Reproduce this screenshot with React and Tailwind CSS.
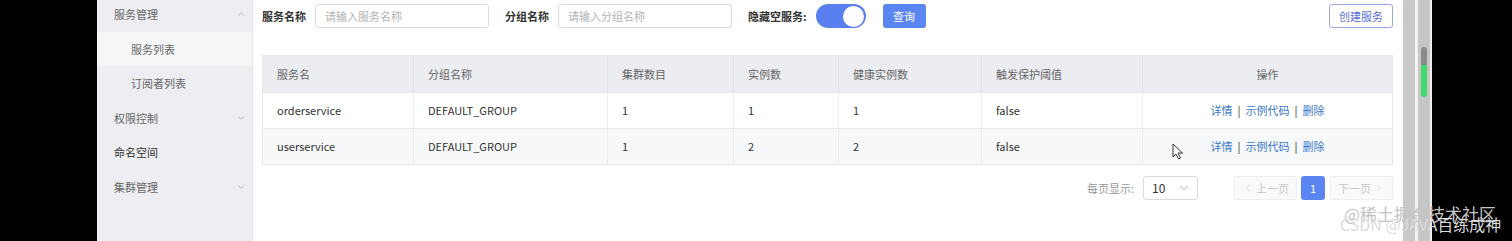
import { ChevronUp, ChevronDown, ChevronLeft, ChevronRight } from "lucide-react"

const font = { fontFamily: '"Noto Sans CJK SC", "Noto Sans", sans-serif' }

const menu = [
  { label: "服务管理", icon: "up" },
  { label: "服务列表", sub: true, active: true },
  { label: "订阅者列表", sub: true },
  { label: "权限控制", icon: "down" },
  { label: "命名空间", dark: true },
  { label: "集群管理", icon: "down" },
]

const columns = [
  { title: "服务名", w: "w-[151px]" },
  { title: "分组名称", w: "w-[194px]" },
  { title: "集群数目", w: "w-[126px]" },
  { title: "实例数", w: "w-[105px]" },
  { title: "健康实例数", w: "w-[143px]" },
  { title: "触发保护阈值", w: "w-[161px]" },
]

const rows = [
  ["orderservice", "DEFAULT_GROUP", "1", "1", "1", "false"],
  ["userservice", "DEFAULT_GROUP", "1", "2", "2", "false"],
]

const Sidebar = () => (
  <div className="w-[156px] shrink-0 bg-[#eceef1] border-r border-[#e2e4e8] overflow-hidden">
    <div className="-mt-[3px]">
      {menu.map((m) => (
        <div
          key={m.label}
          className={`h-[34.6px] flex items-center justify-between pr-[6px] text-[11px] ${
            m.sub ? "pl-[34px]" : "pl-[17px]"
          } ${m.active ? "bg-[#f5f6f8]" : ""} ${m.dark ? "text-[#333]" : "text-[#666]"}`}
        >
          <span>{m.label}</span>
          {m.icon === "up" && <ChevronUp size={10} strokeWidth={1.5} className="text-[#999]" />}
          {m.icon === "down" && <ChevronDown size={10} strokeWidth={1.5} className="text-[#999]" />}
        </div>
      ))}
    </div>
  </div>
)

const Field = ({ label, placeholder }) => (
  <div className="flex items-center">
    <span className="text-[11px] font-bold text-[#333] mr-[9px]">{label}</span>
    <input
      readOnly
      placeholder={placeholder}
      className="w-[174px] h-[24px] border border-[#d9dbe0] rounded-[3px] px-[9px] text-[11px] placeholder:text-[#b3b3b3] outline-none"
    />
  </div>
)

const Cursor = () => (
  <svg width="12" height="17" viewBox="0 0 12 17" className="absolute left-[1172px] top-[143px]">
    <path d="M1 1 L1 14 L4 11 L6.5 16 L8.5 15 L6 10 L10.5 10 Z" fill="#fff" stroke="#333" strokeWidth="1" strokeLinejoin="round" />
  </svg>
)

export default function App() {
  return (
    <div className="relative w-[1512px] h-[241px] flex bg-black overflow-hidden" style={font}>
      <div className="w-[97px] shrink-0 bg-black" />
      <Sidebar />
      <div className="w-[1150px] shrink-0 bg-white pl-[9px] pr-[10px] pt-[4px]">
        <div className="flex items-center h-[24px]">
          <Field label="服务名称" placeholder="请输入服务名称" />
          <div className="ml-[16px]">
            <Field label="分组名称" placeholder="请输入分组名称" />
          </div>
          <span className="ml-[16px] text-[11px] font-bold text-[#333]">隐藏空服务:</span>
          <div className="ml-[9px] w-[50px] h-[24px] rounded-full bg-[#5a7ff0] flex items-center justify-end pr-[2px]">
            <div className="w-[21px] h-[21px] rounded-full bg-white" />
          </div>
          <button className="ml-[17px] w-[43px] h-[24px] rounded-[3px] bg-[#5b86f2] text-white text-[11px]">
            查询
          </button>
          <button className="ml-auto w-[64px] h-[24px] rounded-[3px] border border-[#9ea6e0] text-[#5b6fd6] text-[11px] bg-white">
            创建服务
          </button>
        </div>

        <div className="mt-[27px] border border-[#e6e8eb] text-[11px]">
          <div className="flex h-[36px] bg-[#ebedf0] text-[#666]">
            {columns.map((c) => (
              <div key={c.title} className={`${c.w} shrink-0 flex items-center pl-[14px] border-r border-[#e0e2e6]`}>
                {c.title}
              </div>
            ))}
            <div className="flex-1 flex items-center justify-center">操作</div>
          </div>
          {rows.map((r, i) => (
            <div
              key={r[0]}
              className={`flex h-[36px] text-[#333] border-t border-[#e6e8eb] ${i === 1 ? "bg-[#f7f8fa]" : "bg-white"}`}
            >
              {r.map((v, j) => (
                <div key={j} className={`${columns[j].w} shrink-0 flex items-center pl-[14px] border-r border-[#ebedf0]`}>
                  {v}
                </div>
              ))}
              <div className="flex-1 flex items-center justify-center text-[#3a78c9] gap-[5px]">
                <span>详情</span>
                <span className="text-[#333]">|</span>
                <span>示例代码</span>
                <span className="text-[#333]">|</span>
                <span>删除</span>
              </div>
            </div>
          ))}
        </div>

        <div className="mt-[11px] flex items-center justify-end h-[24px] text-[11px]">
          <span className="text-[#999] mr-[9px]">每页显示:</span>
          <div className="w-[55px] h-[24px] border border-[#d9dbe0] rounded-[3px] flex items-center justify-between pl-[8px] pr-[6px] text-[#333] text-[12px]">
            <span>10</span>
            <ChevronDown size={14} strokeWidth={1.2} className="text-[#888]" />
          </div>
          <div className="ml-[36px] w-[63px] h-[24px] border border-[#eceef0] bg-[#fafafa] rounded-[3px] flex items-center justify-center gap-[2px] text-[#c8c8c8]">
            <ChevronLeft size={12} strokeWidth={1.3} />
            <span>上一页</span>
          </div>
          <div className="ml-[4px] w-[24px] h-[24px] rounded-[3px] bg-[#5b86f2] text-white flex items-center justify-center">
            1
          </div>
          <div className="ml-[5px] w-[63px] h-[24px] border border-[#eceef0] bg-[#fafafa] rounded-[3px] flex items-center justify-center gap-[2px] text-[#c8c8c8]">
            <span>下一页</span>
            <ChevronRight size={12} strokeWidth={1.3} />
          </div>
        </div>
      </div>

      <div className="w-[29px] shrink-0 flex">
        <div className="w-[12px] bg-[#c9c9c9]" />
        <div className="w-[3px] bg-[#f2f2f2]" />
        <div className="w-[12px] bg-[#c6c6c6] pt-[47px] flex justify-center">
          <div className="w-[6px] h-[50px] rounded-full overflow-hidden flex flex-col">
            <div className="h-[18px] bg-[#8a8a8a]" />
            <div className="flex-1 bg-[#3ddc6a]" />
          </div>
        </div>
        <div className="w-[2px] bg-[#eeeeee]" />
      </div>
      <div className="flex-1 bg-black" />

      <Cursor />
      <div className="absolute left-[1344px] top-[205px] whitespace-nowrap text-[17px] text-[#c4c4c4] leading-none">@稀土掘金技术社区</div>
      <div className="absolute left-[1340px] top-[216px] whitespace-nowrap text-[16px] text-[#dcdcdc] leading-none">CSDN @JAVA百练成神</div>
    </div>
  )
}
